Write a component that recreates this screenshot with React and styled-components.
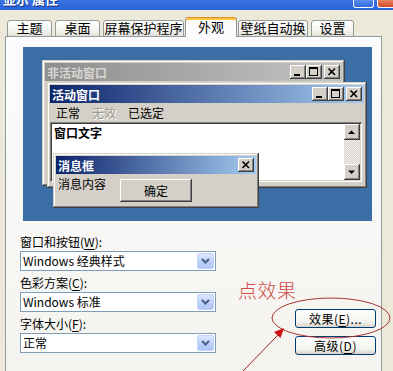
import React from 'react';
import styled, { createGlobalStyle, css } from 'styled-components';

const GlobalStyle = createGlobalStyle`
  html, body {
    margin: 0;
    padding: 0;
  }
  body {
    background: #ece9d8;
    font-family: "Noto Sans CJK SC", "Noto Sans", sans-serif;
    font-size: 12px;
    color: #000;
  }
`;

const Screen = styled.div`
  position: relative;
  width: 393px;
  height: 371px;
  overflow: hidden;
  background: #ece9d8;
`;

/* ---------- caption (cut off at the top) ---------- */

const Caption = styled.div`
  height: 10px;
  display: flex;
  justify-content: space-between;
  overflow: hidden;
  background: linear-gradient(#3b74e2, #2b62da);
`;

const CaptionText = styled.div`
  margin: -9px 0 0 3px;
  color: #fff;
  font-weight: bold;
  font-size: 13px;
  line-height: 16px;
  text-shadow: 1px 1px #10308a;
`;

const CaptionButtons = styled.div`
  display: flex;
  gap: 3px;
  margin-right: -5px;
`;

const CaptionButton = styled.div`
  width: 19px;
  height: 7px;
  border: 1px solid #fff;
  border-top: none;
  border-radius: 0 0 3px 3px;
  background: ${p => (p.$close ? 'linear-gradient(#e88462, #d24a2b)' : 'linear-gradient(#5b8ff0, #3069e4)')};
`;

/* ---------- tabs ---------- */

const TabRow = styled.div`
  position: relative;
  z-index: 1;
  display: flex;
  align-items: flex-end;
  height: 27px;
  padding-left: 7px;
`;

const Tab = styled.div`
  box-sizing: border-box;
  width: ${p => p.$w}px;
  margin-right: ${p => p.$gap}px;
  height: 17px;
  border: 1px solid #919b9c;
  border-radius: 3px 3px 0 0;
  background: linear-gradient(#ffffff, #f4f4f0 60%, #e3e1d8);
  font-size: 13px;
  line-height: 14px;
  text-align: center;
  white-space: nowrap;

  ${p =>
    p.$active &&
    css`
      height: 20px;
      border-top: 1px solid #e68b2c;
      border-bottom: none;
      box-shadow: inset 0 2px #ffc83c;
      background: #fcfcfe;
      padding-top: 2px;
    `}
`;

/* ---------- panel ---------- */

const Panel = styled.div`
  box-sizing: border-box;
  margin: -1px 0 0 5px;
  width: 377px;
  height: 340px;
  border: 1px solid #919b9c;
  border-bottom: none;
  background: linear-gradient(#fcfcfe, #f4f3ee);
  padding-top: 10px;
`;

const Preview = styled.div`
  position: relative;
  margin-left: 17px;
  width: 349px;
  height: 174px;
  background: #3a6ea5;
`;

const ClassicWindow = styled.div`
  position: absolute;
  left: ${p => p.$x}px;
  top: ${p => p.$y}px;
  width: ${p => p.$w}px;
  height: ${p => p.$h}px;
  box-sizing: border-box;
  padding: 3px;
  display: flex;
  flex-direction: column;
  background: #d4d0c8;
  box-shadow: inset -1px -1px #404040, inset 1px 1px #d4d0c8, inset -2px -2px #808080, inset 2px 2px #ffffff;
`;

const WinTitle = styled.div`
  flex: none;
  height: 18px;
  display: flex;
  align-items: center;
  padding: 0 2px 0 2px;
  font-weight: bold;
  font-size: 12px;
  color: ${p => (p.$inactive ? '#d8d6d0' : '#ffffff')};
  background: ${p =>
    p.$inactive ? 'linear-gradient(90deg, #8e8e8e, #c4c4c4)' : 'linear-gradient(90deg, #0a246a, #a6caf0)'};
`;

const TitleLabel = styled.span`
  flex: 1;
`;

const TitleButton = styled.div`
  width: 16px;
  height: 14px;
  margin-left: ${p => p.$gap || 0}px;
  background: #d4d0c8;
  box-shadow: inset -1px -1px #404040, inset 1px 1px #ffffff, inset -2px -2px #808080, inset 2px 2px #d4d0c8;

  svg {
    display: block;
  }
`;

const Glyph = ({ kind }) => (
  <svg width="16" height="14" viewBox="0 0 16 14">
    {kind === 'min' && <rect x="4" y="9" width="6" height="2" fill="#000" />}
    {kind === 'max' && (
      <g fill="none" stroke="#000">
        <rect x="3.5" y="2.5" width="8" height="8" />
        <line x1="3" y1="3.5" x2="12" y2="3.5" />
      </g>
    )}
    {kind === 'close' && (
      <g stroke="#000" strokeWidth="1.6">
        <line x1="4.5" y1="3.5" x2="11" y2="10" />
        <line x1="11" y1="3.5" x2="4.5" y2="10" />
      </g>
    )}
  </svg>
);

const MenuRow = styled.div`
  flex: none;
  height: 18px;
  display: flex;
  align-items: center;
`;

const MenuItem = styled.span`
  padding: 0 6px;
  color: ${p => (p.$disabled ? '#9a978f' : '#000')};
  text-shadow: ${p => (p.$disabled ? '1px 1px #fff' : 'none')};
`;

const TextBox = styled.div`
  flex: 1;
  display: flex;
  margin: 1px 2px 3px 0;
  padding: 2px;
  background: #fff;
  box-shadow: inset 1px 1px #808080, inset -1px -1px #ffffff, inset 2px 2px #404040, inset -2px -2px #d4d0c8;
`;

const TextContent = styled.div`
  flex: 1;
  padding: 1px 2px;
  font-weight: bold;
  line-height: 16px;
`;

const Scrollbar = styled.div`
  width: 16px;
  display: flex;
  flex-direction: column;
  justify-content: space-between;
  background: repeating-conic-gradient(#d4d0c8 0 25%, #f4f3ef 0 50%) 0 0 / 2px 2px;
`;

const ScrollButton = styled(TitleButton)`
  height: 16px;
`;

const Arrow = ({ up }) => (
  <svg width="16" height="16" viewBox="0 0 16 16">
    <polygon points={up ? '4,10 11,10 7.5,6.5' : '4,6.5 11,6.5 7.5,10'} fill="#000" />
  </svg>
);

const MessageBody = styled.div`
  display: flex;
  align-items: flex-start;
  padding: 2px 0 0 2px;
`;

const MessageText = styled.span`
  line-height: 16px;
`;

const ClassicButton = styled.div`
  width: 72px;
  height: 23px;
  margin: 3px 0 0 14px;
  display: flex;
  align-items: center;
  justify-content: center;
  background: #d4d0c8;
  box-shadow: inset -1px -1px #404040, inset 1px 1px #ffffff, inset -2px -2px #808080, inset 2px 2px #d4d0c8;
`;

/* ---------- form ---------- */

const Form = styled.div`
  display: flex;
  margin: 12px 0 0 14px;
`;

const FieldColumn = styled.div`
  width: 196px;
  display: flex;
  flex-direction: column;
`;

const Label = styled.div`
  height: 17px;
  line-height: 17px;
  margin-top: ${p => (p.$first ? 0 : 3)}px;

  u {
    text-underline-offset: 2px;
  }
`;

const Select = styled.div`
  box-sizing: border-box;
  height: 20px;
  margin-top: 1px;
  display: flex;
  align-items: center;
  padding-left: 2px;
  border: 1px solid #7f9db9;
  background: #fff;
`;

const SelectValue = styled.span`
  flex: 1;
  line-height: 16px;
`;

const DropButton = styled.div`
  box-sizing: border-box;
  width: 17px;
  height: 16px;
  margin-right: 1px;
  border: 1px solid #c3d3fd;
  border-radius: 2px;
  background: linear-gradient(#dde8fe, #bacefa 60%, #b0c6f6);

  svg {
    display: block;
  }
`;

const Chevron = () => (
  <svg width="15" height="14" viewBox="0 0 15 14">
    <polyline points="4,5 7.5,8.5 11,5" fill="none" stroke="#4d6185" strokeWidth="2" />
  </svg>
);

const SideColumn = styled.div`
  margin-left: 22px;
  display: flex;
  flex-direction: column;
`;

const Hint = styled.div`
  margin-top: 46px;
  font-size: 19px;
  line-height: 22px;
  letter-spacing: 0.5px;
  color: #cf4a44;
  font-weight: 300;
`;

const XPButton = styled.div`
  box-sizing: border-box;
  width: 81px;
  height: 19px;
  margin: ${p => p.$top}px 0 0 57px;
  display: flex;
  align-items: center;
  justify-content: center;
  border: 1px solid #003c74;
  border-radius: 3px;
  background: linear-gradient(#ffffff, #f3f3ee 70%, #d8d4c9);
  letter-spacing: 0.5px;

  u {
    text-underline-offset: 2px;
  }
`;

const Annotation = styled.svg`
  position: absolute;
  left: 0;
  top: 0;
  pointer-events: none;
`;

const tabs = [
  { label: '主题', w: 45, gap: 3 },
  { label: '桌面', w: 45, gap: 3 },
  { label: '屏幕保护程序', w: 81, gap: 1 },
  { label: '外观', w: 52, gap: 1, active: true },
  { label: '壁纸自动换', w: 70, gap: 3 },
  { label: '设置', w: 43, gap: 0 },
];

const fields = [
  { label: '窗口和按钮', key: 'W', value: 'Windows 经典样式' },
  { label: '色彩方案', key: 'C', value: 'Windows 标准' },
  { label: '字体大小', key: 'F', value: '正常' },
];

const TitleButtons = () => (
  <>
    <TitleButton>
      <Glyph kind="min" />
    </TitleButton>
    <TitleButton>
      <Glyph kind="max" />
    </TitleButton>
    <TitleButton $gap={2}>
      <Glyph kind="close" />
    </TitleButton>
  </>
);

export default function App() {
  return (
    <Screen>
      <GlobalStyle />
      <Caption>
        <CaptionText>显示 属性</CaptionText>
        <CaptionButtons>
          <CaptionButton />
          <CaptionButton $close />
        </CaptionButtons>
      </Caption>

      <TabRow>
        {tabs.map(t => (
          <Tab key={t.label} $w={t.w} $gap={t.gap} $active={t.active}>
            {t.label}
          </Tab>
        ))}
      </TabRow>

      <Panel>
        <Preview>
          <ClassicWindow $x={19} $y={13} $w={303} $h={126}>
            <WinTitle $inactive>
              <TitleLabel>非活动窗口</TitleLabel>
              <TitleButtons />
            </WinTitle>
          </ClassicWindow>

          <ClassicWindow $x={24} $y={35} $w={320} $h={106}>
            <WinTitle>
              <TitleLabel>活动窗口</TitleLabel>
              <TitleButtons />
            </WinTitle>
            <MenuRow>
              <MenuItem>正常</MenuItem>
              <MenuItem $disabled>无效</MenuItem>
              <MenuItem>已选定</MenuItem>
            </MenuRow>
            <TextBox>
              <TextContent>窗口文字</TextContent>
              <Scrollbar>
                <ScrollButton>
                  <Arrow up />
                </ScrollButton>
                <ScrollButton>
                  <Arrow />
                </ScrollButton>
              </Scrollbar>
            </TextBox>
          </ClassicWindow>

          <ClassicWindow $x={30} $y={106} $w={206} $h={55}>
            <WinTitle>
              <TitleLabel>消息框</TitleLabel>
              <TitleButton>
                <Glyph kind="close" />
              </TitleButton>
            </WinTitle>
            <MessageBody>
              <MessageText>消息内容</MessageText>
              <ClassicButton>确定</ClassicButton>
            </MessageBody>
          </ClassicWindow>
        </Preview>

        <Form>
          <FieldColumn>
            {fields.map((f, i) => (
              <React.Fragment key={f.key}>
                <Label $first={i === 0}>
                  {f.label}(<u>{f.key}</u>):
                </Label>
                <Select>
                  <SelectValue>{f.value}</SelectValue>
                  <DropButton>
                    <Chevron />
                  </DropButton>
                </Select>
              </React.Fragment>
            ))}
          </FieldColumn>
          <SideColumn>
            <Hint>点效果</Hint>
            <XPButton $top={8}>
              效果(<u>E</u>)...
            </XPButton>
            <XPButton $top={8}>
              高级(<u>D</u>)
            </XPButton>
          </SideColumn>
        </Form>
      </Panel>

      <Annotation width="393" height="371" viewBox="0 0 393 371">
        <ellipse cx="331" cy="318" rx="59" ry="20" fill="none" stroke="#a83232" strokeWidth="1" />
        <line x1="243" y1="371" x2="279" y2="334" stroke="#a02020" strokeWidth="1" />
        <polygon points="284,328 280.5,338 274,332" fill="#d01010" />
      </Annotation>
    </Screen>
  );
}
